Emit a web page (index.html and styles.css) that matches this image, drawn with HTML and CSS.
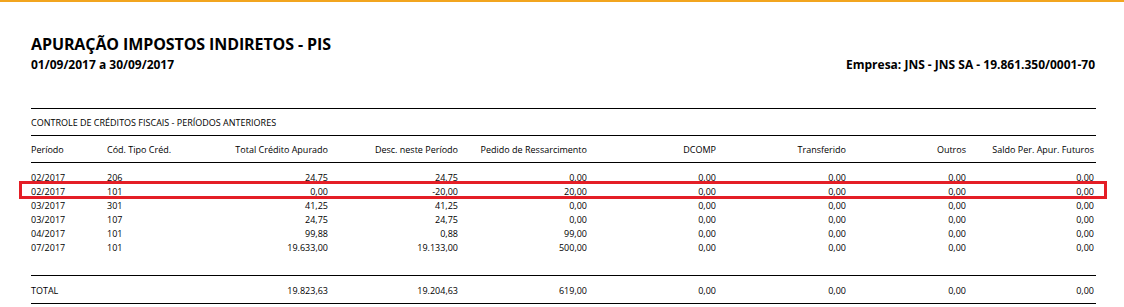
FILE: index.html
```html
<!DOCTYPE html>
<html lang="pt-BR">
<head>
<meta charset="utf-8">
<title>Apuração Impostos Indiretos - PIS</title>
<link rel="stylesheet" href="styles.css">
</head>
<body>
<div class="topbar"></div>
<main class="report">
  <header class="report-head">
    <h1 class="title">APURAÇÃO IMPOSTOS INDIRETOS - PIS</h1>
    <div class="subline">
      <span class="period">01/09/2017 a 30/09/2017</span>
      <span class="company">Empresa: JNS - JNS SA - 19.861.350/0001-70</span>
    </div>
  </header>

  <section class="section">
    <div class="section-title">CONTROLE DE CRÉDITOS FISCAIS - PERÍODOS ANTERIORES</div>
    <div class="grid head-row">
      <span>Período</span>
      <span>Cód. Tipo Créd.</span>
      <span class="num">Total Crédito Apurado</span>
      <span class="num">Desc. neste Período</span>
      <span class="num">Pedido de Ressarcimento</span>
      <span class="num">DCOMP</span>
      <span class="num">Transferido</span>
      <span class="num">Outros</span>
      <span class="num">Saldo Per. Apur. Futuros</span>
    </div>
    <div class="body">
      <div class="grid row">
        <span>02/2017</span><span>206</span><span class="num">24,75</span><span class="num">24,75</span><span class="num">0,00</span><span class="num">0,00</span><span class="num">0,00</span><span class="num">0,00</span><span class="num">0,00</span>
      </div>
      <div class="grid row highlight">
        <span>02/2017</span><span>101</span><span class="num">0,00</span><span class="num">-20,00</span><span class="num">20,00</span><span class="num">0,00</span><span class="num">0,00</span><span class="num">0,00</span><span class="num">0,00</span>
      </div>
      <div class="grid row">
        <span>03/2017</span><span>301</span><span class="num">41,25</span><span class="num">41,25</span><span class="num">0,00</span><span class="num">0,00</span><span class="num">0,00</span><span class="num">0,00</span><span class="num">0,00</span>
      </div>
      <div class="grid row">
        <span>03/2017</span><span>107</span><span class="num">24,75</span><span class="num">24,75</span><span class="num">0,00</span><span class="num">0,00</span><span class="num">0,00</span><span class="num">0,00</span><span class="num">0,00</span>
      </div>
      <div class="grid row">
        <span>04/2017</span><span>101</span><span class="num">99,88</span><span class="num">0,88</span><span class="num">99,00</span><span class="num">0,00</span><span class="num">0,00</span><span class="num">0,00</span><span class="num">0,00</span>
      </div>
      <div class="grid row">
        <span>07/2017</span><span>101</span><span class="num">19.633,00</span><span class="num">19.133,00</span><span class="num">500,00</span><span class="num">0,00</span><span class="num">0,00</span><span class="num">0,00</span><span class="num">0,00</span>
      </div>
    </div>
    <div class="grid total-row">
      <span>TOTAL</span><span></span><span class="num">19.823,63</span><span class="num">19.204,63</span><span class="num">619,00</span><span class="num">0,00</span><span class="num">0,00</span><span class="num">0,00</span><span class="num">0,00</span>
    </div>
  </section>
</main>
</body>
</html>
```

FILE: styles.css
```css
* { box-sizing: border-box; }

html, body {
  margin: 0;
  padding: 0;
  background: #ffffff;
  color: #000000;
  font-family: "Open Sans", "Noto Sans", "DejaVu Sans", sans-serif;
}

.topbar {
  height: 2px;
  background: #f2a51f;
}

.report {
  padding: 0 28px 0 31px;
}

.report-head {
  padding-top: 32px;
}

.title {
  margin: 0;
  font-size: 16px;
  font-weight: 700;
  line-height: 20px;
  letter-spacing: -0.1px;
}

.subline {
  display: flex;
  justify-content: space-between;
  align-items: baseline;
  font-size: 12px;
  font-weight: 700;
  line-height: 16px;
  margin-top: 3px;
  padding-right: 1px;
}

.section {
  margin-top: 35px;
  border-top: 1px solid #000;
  font-size: 9px;
}

.section-title {
  height: 27px;
  line-height: 27px;
  border-bottom: 1px solid #000;
}

.grid {
  display: grid;
  grid-template-columns: 76px 123px 98px 130px 129px 129px 130px 120px 128px;
  padding-right: 2px;
}

.grid .num {
  text-align: right;
}

.head-row {
  height: 27px;
  align-items: center;
  border-bottom: 1px solid #000;
}

.body {
  padding-top: 7px;
  height: 113px;
  border-bottom: 1px solid #000;
}

.row {
  height: 14px;
  line-height: 15px;
  position: relative;
}

.highlight::after {
  content: "";
  position: absolute;
  top: -3px;
  bottom: -1px;
  left: -12px;
  right: -11px;
  border: 3px solid #e41e26;
}

.total-row {
  height: 28px;
  line-height: 29px;
  border-bottom: 1px solid #000;
}
```
